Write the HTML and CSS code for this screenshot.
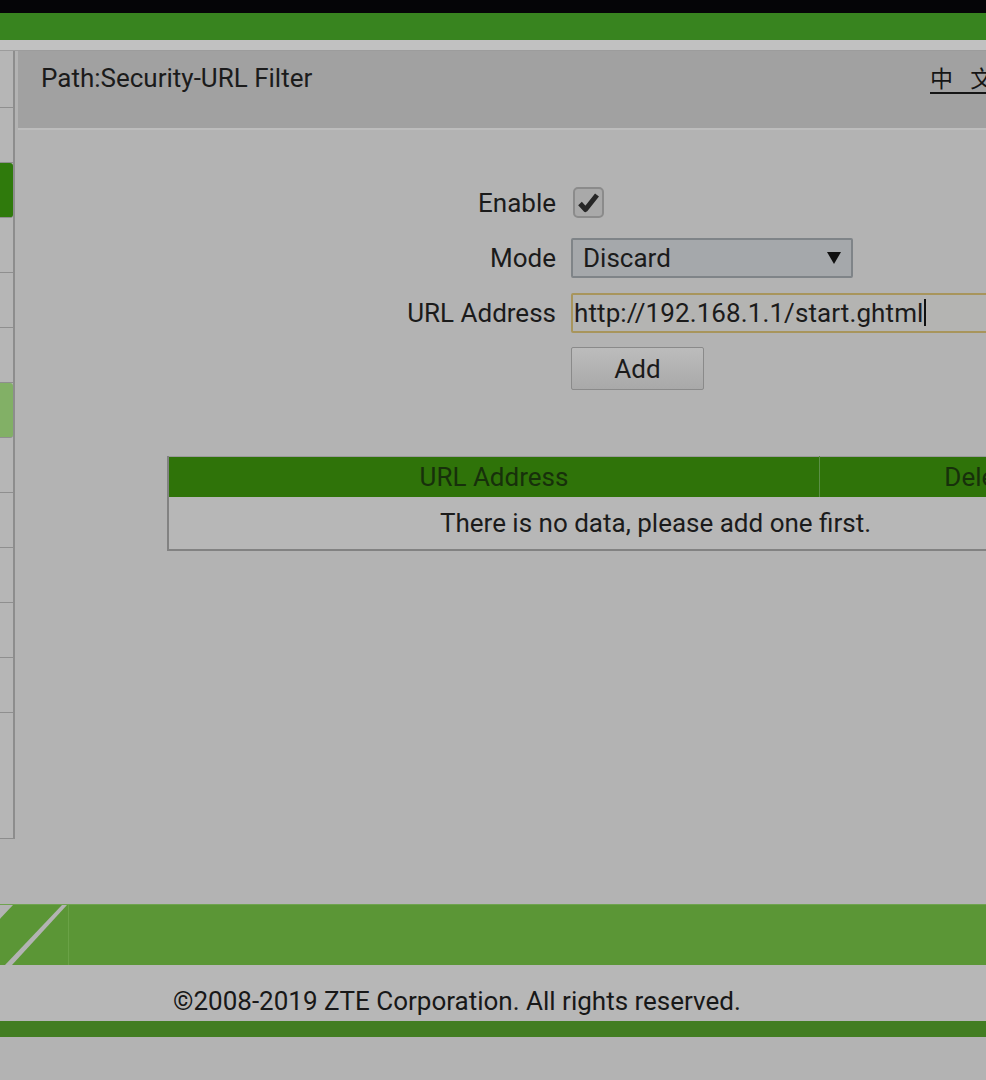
FILE: index.html
```html
<html>
<head>
<meta http-equiv="Content-Type" content="text/html; charset=UTF-8">
<title>URL Filter</title>
<link rel="stylesheet" href="styles.css">
</head>
<body>
<div class="topbar"></div>
<div class="banner"></div>
<div class="strip"></div>

<div class="main">
	<ul class="menu">
		<li class="first"></li>
		<li></li>
		<li class="on"></li>
		<li></li>
		<li></li>
		<li></li>
		<li class="sub"></li>
		<li></li>
		<li></li>
		<li></li>
		<li></li>
		<li></li>
	</ul>

	<div class="content">
		<div class="path">
			<span class="path_title">Path:Security-URL Filter</span>
			<a class="lang" href="#">中 文</a>
		</div>

		<div class="form">
			<label class="lbl">Enable</label>
			<div class="ctl">
				<span class="check">
					<svg width="31" height="31" viewBox="0 0 31 31">
						<rect x="1" y="1" width="29" height="29" rx="4" fill="#a9a9a9" stroke="#8b8b8b" stroke-width="2"/>
						<path d="M7 16.5 L12.5 22.5 L24 8" fill="none" stroke="#262626" stroke-width="5" stroke-linejoin="round"/>
					</svg>
				</span>
			</div>

			<label class="lbl">Mode</label>
			<div class="ctl">
				<div class="select"><span>Discard</span><span class="arrow"></span></div>
			</div>

			<label class="lbl">URL Address</label>
			<div class="ctl">
				<div class="textbox">http://192.168.1.1/start.ghtml<span class="caret"></span></div>
			</div>

			<span></span>
			<div class="ctl">
				<button class="btn">Add</button>
			</div>
		</div>

		<table class="list">
			<tr>
				<th class="col_url">URL Address</th>
				<th>Delete</th>
			</tr>
			<tr>
				<td colspan="2">There is no data, please add one first.</td>
			</tr>
		</table>
	</div>
</div>

<div class="footbar">
	<svg class="slant" width="68" height="60" viewBox="0 0 68 60">
		<polygon points="13,0 62,0 5,60 -44,60" fill="#5b9636"/>
		<polygon points="67,0 68,0 68,60 12,60" fill="#5b9636"/>
	</svg>
	<div class="footfill"></div>
</div>
<div class="copy">©2008-2019 ZTE Corporation. All rights reserved.</div>
<div class="bottombar"></div>
</body>
</html>
```

FILE: styles.css
```css
html, body{
	margin: 0;
	padding: 0;
	overflow: hidden;
}

body{
	width: 986px;
	height: 1080px;
	background: #b3b3b3;
	font-family: Roboto, "Noto Sans", sans-serif;
	font-size: 26px;
	color: #1b1b1b;
}

div.topbar{
	height: 13px;
	background: #050507;
}

div.banner{
	height: 27px;
	background: #38841f;
}

div.strip{
	height: 10px;
	background: #c1c1c1;
	border-bottom: 1px solid #9c9c9c;
}

div.main{
	display: flex;
	align-items: flex-start;
	width: 1200px;
}

/* left menu, only its edge shows */
ul.menu{
	list-style: none;
	margin: 0;
	padding: 0;
	width: 13px;
	height: 787px;
	border-right: 2px solid #8d8d8d;
	border-bottom: 1px solid #8d8d8d;
	background: #b6b6b6;
}

ul.menu li{
	height: 54px;
	border-bottom: 1px solid #8f8f8f;
}

ul.menu li.first{height: 56px}
ul.menu li.on{background: #2f7a0c; border-radius: 0 3px 3px 0}
ul.menu li.sub{background: #82b066; border-radius: 0 3px 3px 0}

div.content{
	margin-left: 3px;
	width: 1170px;
}

div.path{
	display: flex;
	align-items: baseline;
	height: 68px;
	padding: 9px 0 0 23px;
	background: #a1a1a1;
	border-bottom: 2px solid #bdbdbd;
}

span.path_title{
	width: 889px;
	line-height: 30px;
}

a.lang{
	font-family: "Noto Sans CJK SC", sans-serif;
	font-size: 23px;
	color: #151515;
	word-spacing: 12px;
	text-decoration: underline;
	text-underline-offset: 5px;
}

div.form{
	display: grid;
	grid-template-columns: 538px auto;
	grid-auto-rows: 55px;
	column-gap: 15px;
	margin-top: 45px;
}

label.lbl{
	display: flex;
	align-items: center;
	justify-content: flex-end;
}

div.ctl{
	display: flex;
	align-items: center;
}

span.check{
	display: flex;
	margin-left: 2px;
}

div.select{
	display: flex;
	align-items: center;
	justify-content: space-between;
	box-sizing: border-box;
	width: 282px;
	height: 40px;
	padding: 0 10px 0 10px;
	background: #a5a8ab;
	border: 2px solid #7f8488;
	border-radius: 2px;
}

span.arrow{
	width: 0;
	height: 0;
	border-left: 7px solid transparent;
	border-right: 7px solid transparent;
	border-top: 12px solid #101010;
}

div.textbox{
	display: flex;
	align-items: center;
	box-sizing: border-box;
	width: 440px;
	height: 40px;
	padding-left: 1px;
	background: #b4b4b2;
	border: 2px solid #a8955c;
	border-radius: 2px;
	letter-spacing: 0.1px;
}

span.caret{
	width: 2px;
	height: 27px;
	margin-left: 1px;
	background: #111;
}

button.btn{
	box-sizing: border-box;
	width: 133px;
	height: 43px;
	margin-top: 2px;
	font-family: Roboto, sans-serif;
	font-size: 26px;
	color: #1b1b1b;
	background: linear-gradient(#bcbcbc, #a9a9a9);
	border: 1px solid #8a8a8a;
	border-radius: 2px;
}

table.list{
	width: 977px;
	margin: 61px 0 0 149px;
	border-collapse: collapse;
	border: 2px solid #828282;
	border-top: 1px solid #9a9a9a;
	font-family: Roboto, "Noto Sans", sans-serif;
	font-size: 26px;
	color: #1b1b1b;
}

table.list th{
	height: 40px;
	padding: 0;
	font-weight: normal;
	color: #17300b;
	background: #2f7309;
	border-left: 1px solid #5b8f45;
}

table.list th.col_url{
	width: 650px;
	border-left: none;
}

table.list td{
	height: 53px;
	padding: 0;
	text-align: center;
	background: #b7b7b7;
}

div.footbar{
	display: flex;
	height: 60px;
	margin-top: 65px;
	border-top: 1px solid #6fa34f;
}

svg.slant{
	flex: none;
}

div.footfill{
	flex: 1;
	background: #5b9636;
	border-left: 1px solid #6aa246;
}

div.copy{
	height: 30px;
	line-height: 30px;
	padding: 21px 0 5px 173px;
	background: #b7b7b7;
	color: #181818;
}

div.bottombar{
	height: 16px;
	background: #427d22;
}
```
